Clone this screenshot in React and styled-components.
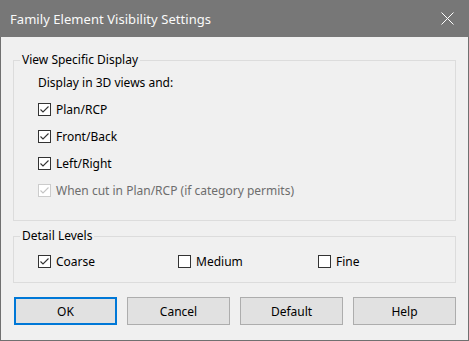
import styled, { createGlobalStyle } from "styled-components";

const Global = createGlobalStyle`
  html, body { margin: 0; padding: 0; background: #f0f0f0; }
  body { font-family: "Noto Sans", "Segoe UI", sans-serif; font-size: 12px; color: #000; }
  * { box-sizing: border-box; }
`;

const Window = styled.div`
  width: 469px;
  height: 341px;
  border: 1px solid #707070;
  border-top: none;
  background: #f0f0f0;
  display: flex;
  flex-direction: column;
`;

const TitleBar = styled.div`
  height: 37px;
  background: #777777;
  color: #fafafa;
  font-size: 13px;
  letter-spacing: 0.05px;
  display: flex;
  align-items: center;
  justify-content: space-between;
  padding: 0 15px 0 10px;
  margin: 0 -1px;
`;

const Close = styled.svg`
  width: 13px;
  height: 13px;
`;

const Body = styled.div`
  padding: 15px 12px 0 12px;
  display: flex;
  flex-direction: column;
`;

const Group = styled.fieldset`
  margin: 0 0 ${(p) => p.$gap || 0}px 0;
  padding: ${(p) => p.$pad};
  border: 1px solid #dcdcdc;
  display: flex;
  flex-direction: column;
`;

const Legend = styled.legend`
  padding: 0 2px;
  margin-left: 6px;
  line-height: 16px;
`;

const Label = styled.div`
  height: 27px;
  display: flex;
  align-items: center;
  padding-left: 24px;
`;

const Row = styled.div`
  display: flex;
  padding-left: 24px;
`;

const Check = styled.label`
  height: 27px;
  width: ${(p) => (p.$w ? p.$w + "px" : "auto")};
  display: flex;
  align-items: center;
  gap: 5px;
  color: ${(p) => (p.$disabled ? "#6d6d6d" : "#000")};
`;

const Box = styled.span`
  width: 13px;
  height: 13px;
  border: 1px solid ${(p) => (p.$disabled ? "#cccccc" : "#333333")};
  background: #fff;
  display: flex;
  align-items: center;
  justify-content: center;
`;

const Buttons = styled.div`
  display: flex;
  justify-content: space-between;
  padding: 14px 0 0 1px;
`;

const Button = styled.button`
  width: 103px;
  height: 28px;
  font: inherit;
  color: #000;
  background: #e1e1e1;
  border: ${(p) => (p.$primary ? "2px solid #0078d7" : "1px solid #adadad")};
  padding: 0;
`;

function Checkbox({ label, checked, disabled, width }) {
  return (
    <Check $disabled={disabled} $w={width}>
      <Box $disabled={disabled}>
        {checked && (
          <svg width="11" height="11" viewBox="0 0 11 11">
            <polyline
              points="1.5,5.5 4,8 9.5,2.5"
              fill="none"
              stroke={disabled ? "#c4c4c4" : "#333"}
              strokeWidth="1.1"
            />
          </svg>
        )}
      </Box>
      {label}
    </Check>
  );
}

export default function App() {
  return (
    <>
      <Global />
      <Window>
        <TitleBar>
          Family Element Visibility Settings
          <Close viewBox="0 0 13 13">
            <path d="M0.5,0.5 L12.5,12.5 M12.5,0.5 L0.5,12.5" stroke="#fff" strokeWidth="1" />
          </Close>
        </TitleBar>
        <Body>
          <Group $pad="1px 0 16px 0" $gap={7}>
            <Legend>View Specific Display</Legend>
            <Label>Display in 3D views and:</Label>
            <Row><Checkbox label="Plan/RCP" checked /></Row>
            <Row><Checkbox label="Front/Back" checked /></Row>
            <Row><Checkbox label="Left/Right" checked /></Row>
            <Row><Checkbox label="When cut in Plan/RCP (if category permits)" checked disabled /></Row>
          </Group>
          <Group $pad="4px 0 7px 0">
            <Legend>Detail Levels</Legend>
            <Row>
              <Checkbox label="Coarse" checked width={140} />
              <Checkbox label="Medium" width={140} />
              <Checkbox label="Fine" />
            </Row>
          </Group>
          <Buttons>
            <Button $primary>OK</Button>
            <Button>Cancel</Button>
            <Button>Default</Button>
            <Button>Help</Button>
          </Buttons>
        </Body>
      </Window>
    </>
  );
}
